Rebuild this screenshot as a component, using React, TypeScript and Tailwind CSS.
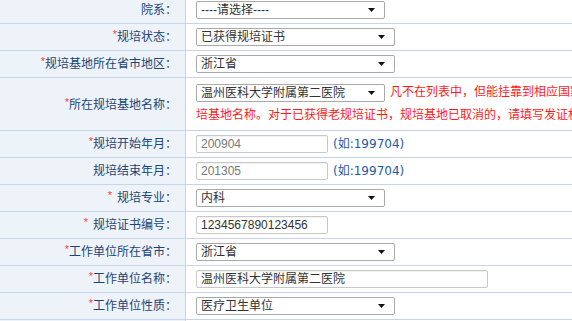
import React from "react";

const cjk = "font-['Liberation_Sans','Noto_Sans_CJK_SC',sans-serif]";

function Star({ space }: { space?: boolean }) {
  return (
    <span className={"relative -top-[3px] text-[11px] text-[#ff3b3b] " + (space ? "mr-[5px]" : "")}>*</span>
  );
}

function Arrow() {
  return (
    <svg width="7" height="4" viewBox="0 0 7 4" className="ml-auto mr-[9px] shrink-0">
      <path d="M0 0H7L3.5 4Z" fill="#111" />
    </svg>
  );
}

function Select({ value, w }: { value: string; w: string }) {
  return (
    <div
      className={`inline-flex h-[18px] ${w} items-center rounded-[2px] border border-[#a9a9a9] bg-white pl-[4px] align-middle text-[12px] leading-none text-[#333]`}
    >
      <span>{value}</span>
      <Arrow />
    </div>
  );
}

function Input({ value, w, light }: { value: string; w: string; light?: boolean }) {
  return (
    <div
      className={`inline-flex h-[18px] ${w} items-center rounded-[2px] border border-[#c8c8c8] bg-white pl-[4px] align-middle text-[12px] leading-none shadow-[inset_0_1px_1px_rgba(0,0,0,0.06)] ${
        light ? "text-[#777]" : "text-[#333]"
      }`}
    >
      {value}
    </div>
  );
}

function Hint() {
  return (
    <span className="ml-[5px] align-middle font-['DejaVu_Sans','Noto_Sans_CJK_SC',sans-serif] text-[12px] text-[#1f5aa6]">
      (如:199704)
    </span>
  );
}

function Row({
  label,
  star,
  space,
  tall,
  children,
}: {
  label: string;
  star?: boolean;
  space?: boolean;
  tall?: boolean;
  children: React.ReactNode;
}) {
  return (
    <div className="flex border-b border-[#c6d5ea]">
      <div
        className={`flex w-[186px] shrink-0 items-center justify-end border-r border-[#c6d5ea] bg-[#eef3fa] pr-[8px] text-[12px] text-[#1a4578] ${
          tall ? "h-[52px] pt-[2px]" : "h-[26px]"
        }`}
      >
        {star && <Star space={space} />}
        <span>{label}</span>
      </div>
      <div className={`flex-1 bg-white pl-[10px] ${tall ? "" : "flex items-center"}`}>{children}</div>
    </div>
  );
}

export default function App() {
  return (
    <div className={`h-[321px] w-[572px] overflow-hidden bg-white ${cjk}`}>
      <div className="-mt-[3px]">
        <Row label="院系：">
          <Select value="----请选择----" w="w-[189px]" />
        </Row>
        <Row label="规培状态：" star>
          <Select value="已获得规培证书" w="w-[199px]" />
        </Row>
        <Row label="规培基地所在省市地区：" star>
          <Select value="浙江省" w="w-[199px]" />
        </Row>
        <Row label="所在规培基地名称：" star tall>
          <div className="h-[52px] overflow-hidden whitespace-nowrap pt-[3px] text-[12px] leading-[23px] text-[#ff1a1a]">
            <Select value="温州医科大学附属第二医院" w="w-[189px]" />
            <span className="ml-[5px] align-middle">凡不在列表中，但能挂靠到相应国家规培基地的，请选择相应规</span>
            <br />
            <span>培基地名称。对于已获得老规培证书，规培基地已取消的，请填写发证机构名称。</span>
          </div>
        </Row>
        <Row label="规培开始年月：" star>
          <Input value="200904" w="w-[132px]" light />
          <Hint />
        </Row>
        <Row label="规培结束年月：">
          <Input value="201305" w="w-[132px]" light />
          <Hint />
        </Row>
        <Row label="规培专业：" star space>
          <Select value="内科" w="w-[189px]" />
        </Row>
        <Row label="规培证书编号：" star space>
          <Input value="1234567890123456" w="w-[132px]" />
        </Row>
        <Row label="工作单位所在省市：" star>
          <Select value="浙江省" w="w-[199px]" />
        </Row>
        <Row label="工作单位名称：" star>
          <Input value="温州医科大学附属第二医院" w="w-[292px]" />
        </Row>
        <Row label="工作单位性质：" star>
          <Select value="医疗卫生单位" w="w-[199px]" />
        </Row>
        <Row label="">
          <span />
        </Row>
      </div>
    </div>
  );
}
